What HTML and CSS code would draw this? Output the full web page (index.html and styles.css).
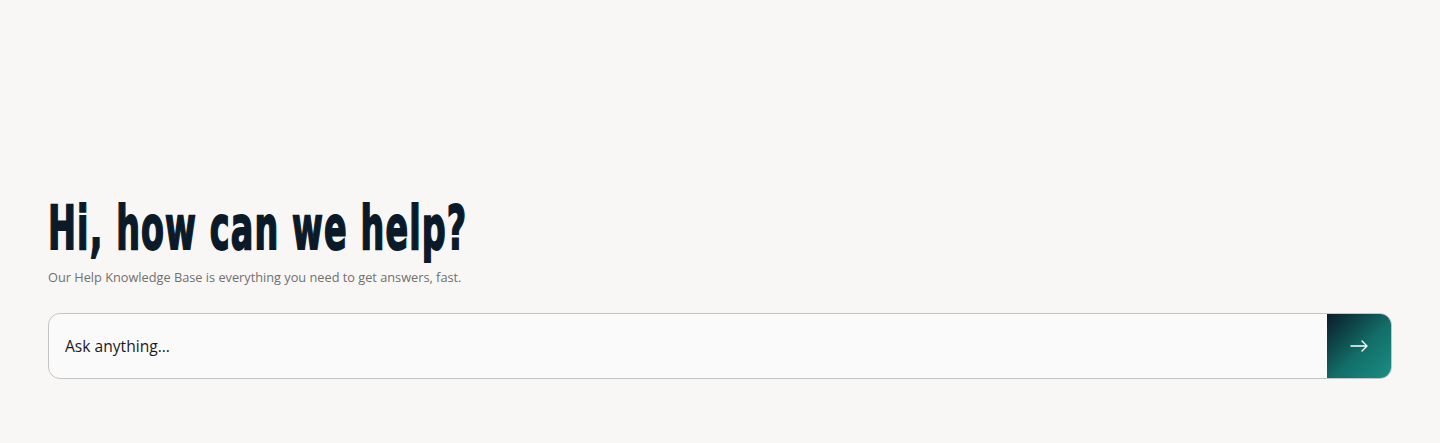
FILE: index.html
```html
<!DOCTYPE html>
<html lang="en">
<head>
  <meta charset="UTF-8" />
  <meta name="viewport" content="width=device-width, initial-scale=1.0"/>
  <title>Help Center</title>
  <link rel="stylesheet" href="styles.css">
</head>
<body>
  <div class="hero">
    <h1 class="title"><span>Hi, how can we help?</span></h1>
    <p class="subtitle">Our Help Knowledge Base is everything you need to get answers, fast.</p>

    <form class="search" onsubmit="return false">
      <input class="search-input" type="text" placeholder="Ask anything...">
      <button class="search-btn" type="submit" aria-label="Search">
        <svg width="20" height="20" viewBox="0 0 20 20" fill="none" stroke="#fff" stroke-width="1.4" stroke-linecap="round" stroke-linejoin="round">
          <path d="M2 10h16M13 5l5 5-5 5"/>
        </svg>
      </button>
    </form>
  </div>
</body>
</html>
```

FILE: styles.css
```css
body {
  margin: 0;
  background: #f8f7f5;
  font-family: "Open Sans", "DejaVu Sans", sans-serif;
  color: #0b1a28;
}
.hero {
  padding: 196px 48px 64px;
}
.title {
  margin: 0;
  font-family: "DejaVu Sans", sans-serif;
  font-weight: bold;
  font-size: 61px;
  line-height: 64px;
  letter-spacing: 2px;
  color: #0b1a28;
}
/* no condensed face installed, so squeeze the heading */
.title span {
  display: inline-block;
  transform: scaleX(0.548);
  transform-origin: left center;
  white-space: nowrap;
  -webkit-text-stroke: 2px #0b1a28;
}
.subtitle {
  margin: 8px 0 27px;
  font-size: 12.75px;
  line-height: 18px;
  color: #707070;
}
.search {
  display: flex;
  height: 64px;
  border: 1px solid #c4c4c4;
  border-radius: 12px;
  background: #fbfafb;
  overflow: hidden;
}
.search-input {
  flex: 1;
  border: none;
  background: transparent;
  padding: 0 16px;
  font-family: inherit;
  font-size: 15.6px;
  color: #1a1a1a;
  outline: none;
}
.search-input::placeholder { color: #1a1a1a; }
.search-btn {
  width: 64px;
  border: none;
  background: linear-gradient(135deg, #0a1c28 0%, #126d68 55%, #1a8f84 100%);
  display: flex;
  align-items: center;
  justify-content: center;
  cursor: pointer;
}
```
